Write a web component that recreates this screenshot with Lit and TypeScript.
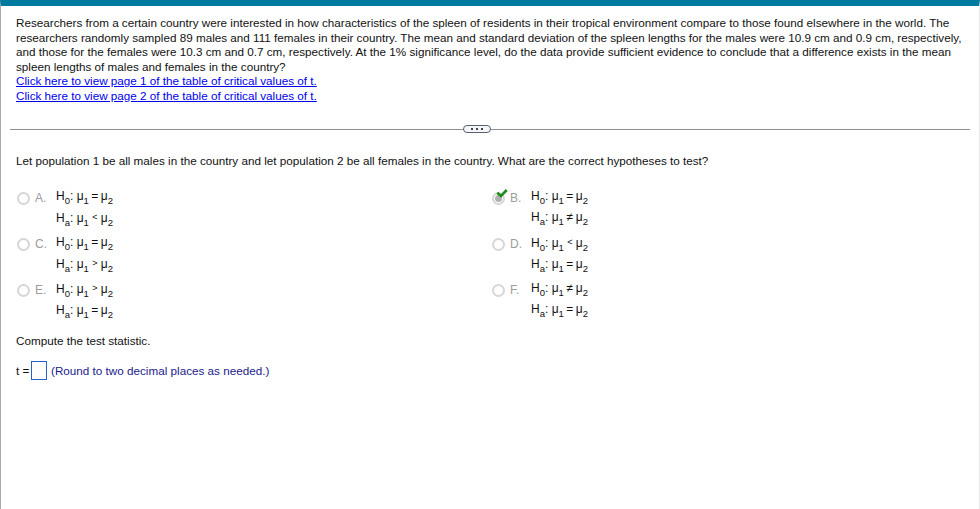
import { html, css, LitElement } from "lit";
import { customElement } from "lit/decorators.js";

type Opt = { key: string; h0: string; ha: string; checked?: boolean };

const OPTIONS: Opt[] = [
    { key: "A", h0: "=", ha: "<" },
    { key: "B", h0: "=", ha: "≠", checked: true },
    { key: "C", h0: "=", ha: ">" },
    { key: "D", h0: "<", ha: "=" },
    { key: "E", h0: ">", ha: "=" },
    { key: "F", h0: "≠", ha: "=" },
];

@customElement("app-root")
export class AppRoot extends LitElement {
    static styles = css`
        :host {
            display: block;
            width: 980px;
            height: 509px;
            box-sizing: border-box;
            overflow: hidden;
            background: #fff;
            border-top: 6px solid #007a9e;
            border-left: 1px solid #a8a8a8;
            border-right: 1px solid #e8e8e8;
            font-family: "Liberation Sans", Arial, sans-serif;
            font-size: 11.7px;
            color: #111;
        }

        .question {
            padding: 10px 12px 0 15px;
            line-height: 14.5px;
            height: 91px;
        }

        .question a {
            display: block;
            color: #0000ee;
            text-decoration: underline;
        }

        .divider {
            position: relative;
            height: 1px;
            margin: 22px 9px 0 9px;
            background: #8f8f9a;
        }

        .more {
            position: absolute;
            left: 453px;
            top: -4px;
            width: 28px;
            height: 8px;
            box-sizing: border-box;
            border: 1px solid #5a6070;
            border-radius: 4px;
            background: #f4f6fa;
            display: flex;
            align-items: center;
            justify-content: center;
            gap: 3px;
        }

        .more i {
            width: 2px;
            height: 2px;
            background: #444;
        }

        .prompt {
            margin: 24px 0 0 15px;
            line-height: 14px;
        }

        .options {
            display: grid;
            grid-template-columns: 475px 1fr;
            margin: 22px 0 0 16px;
            row-gap: 2px;
        }

        .option {
            display: flex;
            align-items: flex-start;
            height: 44px;
        }

        .radio {
            position: relative;
            width: 13px;
            height: 13px;
            box-sizing: border-box;
            border: 2px solid #d6d6d6;
            border-radius: 50%;
            margin-top: 2px;
            flex: none;
        }

        .radio.on::before {
            content: "";
            position: absolute;
            left: 1px;
            top: 1px;
            width: 7px;
            height: 7px;
            border-radius: 50%;
            background: #b0b0b0;
        }

        .radio svg {
            position: absolute;
            left: 1px;
            top: -6px;
        }

        .key {
            width: 21px;
            margin-left: 5px;
            color: #9c9c9c;
            font-size: 12px;
            line-height: 14px;
            margin-top: 1px;
            flex: none;
        }

        .math {
            line-height: 21px;
            margin-top: -4px;
            white-space: nowrap;
            font-size: 12px;
        }

        .math .op {
            display: inline-block;
            width: 10px;
            text-align: center;
            margin: 0 1px;
        }

        .math .op.small {
            font-size: 9px;
            vertical-align: 2px;
        }

        sub {
            font-size: 9.5px;
            line-height: 0;
            vertical-align: -4px;
        }

        .compute {
            margin: 8px 0 0 15px;
            line-height: 14px;
        }

        .answer {
            display: flex;
            align-items: center;
            margin: 13px 0 0 15px;
            line-height: 14px;
        }

        .answer .t {
            width: 15px;
            flex: none;
        }

        .box {
            width: 16px;
            height: 19px;
            box-sizing: border-box;
            border: 1px solid #2a62c9;
            margin-right: 4px;
            flex: none;
        }

        .hint {
            color: #1c1c8c;
        }
    `;

    renderLine(sub1: string, op: string) {
        const small = op == "<" || op == ">";
        return html`<div>
            H<sub>${sub1}</sub>: μ<sub>1</sub><span class="op ${small ? "small" : ""}">${op}</span>μ<sub>2</sub>
        </div>`;
    }

    renderOption(o: Opt) {
        return html`
            <div class="option">
                <span class="radio ${o.checked ? "on" : ""}">
                    ${o.checked
                        ? html`<svg width="13" height="10" viewBox="0 0 13 10">
                              <path d="M2.3 4.7 L6 8 L11.7 2" fill="none" stroke="#1c8c1c" stroke-width="2.6" />
                          </svg>`
                        : ""}
                </span>
                <span class="key">${o.key}.</span>
                <div class="math">
                    ${this.renderLine("0", o.h0)} ${this.renderLine("a", o.ha)}
                </div>
            </div>
        `;
    }

    render() {
        return html`
            <div class="question">
                Researchers from a certain country were interested in how characteristics of the spleen of residents in their tropical environment compare to those found elsewhere in the world. The
                researchers randomly sampled 89 males and 111 females in their country. The mean and standard deviation of the spleen lengths for the males were 10.9 cm and 0.9 cm, respectively,
                and those for the females were 10.3 cm and 0.7 cm, respectively. At the 1% significance level, do the data provide sufficient evidence to conclude that a difference exists in the mean
                spleen lengths of males and females in the country?
                <a href="#">Click here to view page 1 of the table of critical values of t.</a>
                <a href="#">Click here to view page 2 of the table of critical values of t.</a>
            </div>
            <div class="divider"><div class="more"><i></i><i></i><i></i></div></div>
            <div class="prompt">
                Let population 1 be all males in the country and let population 2 be all females in the country. What are the correct hypotheses to test?
            </div>
            <div class="options">${OPTIONS.map((o) => this.renderOption(o))}</div>
            <div class="compute">Compute the test statistic.</div>
            <div class="answer">
                <span class="t">t =</span><span class="box"></span>
                <span class="hint">(Round to two decimal places as needed.)</span>
            </div>
        `;
    }
}
